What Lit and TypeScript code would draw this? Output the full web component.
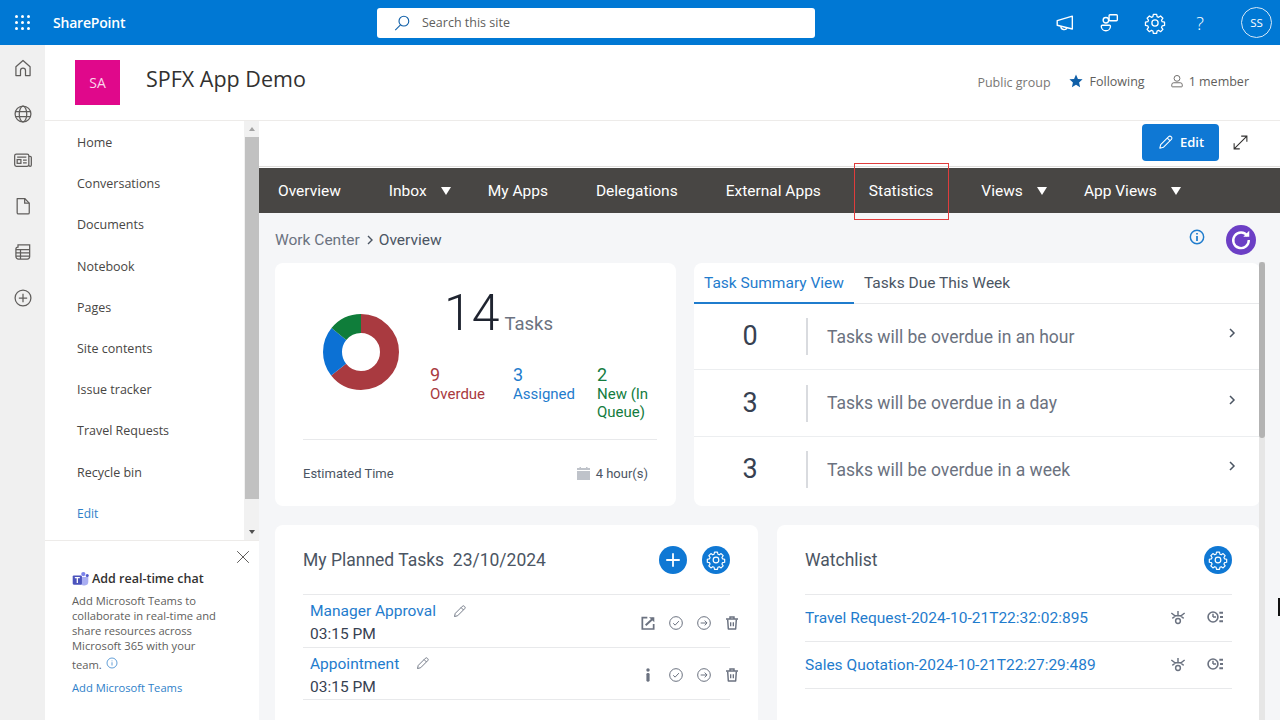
import { LitElement, html, css, svg } from 'lit';
import { customElement } from 'lit/decorators.js';

const gear = svg`<path d="M10.2 2.5h3.6l.5 2.6 1.6.7 2.2-1.5 2.5 2.5-1.5 2.2.7 1.6 2.6.5v3.6l-2.6.5-.7 1.6 1.5 2.2-2.5 2.5-2.2-1.5-1.6.7-.5 2.6h-3.6l-.5-2.6-1.6-.7-2.2 1.5-2.5-2.5 1.5-2.2-.7-1.6-2.6-.5v-3.6l2.6-.5.7-1.6-1.5-2.2 2.5-2.5 2.2 1.5 1.6-.7z" fill="none" stroke="currentColor" stroke-width="1.4" stroke-linejoin="round"/><circle cx="12" cy="12" r="3.4" fill="none" stroke="currentColor" stroke-width="1.4"/>`;

function icon(size: number, body: unknown, box = 24) {
	return html`<svg width=${size} height=${size} viewBox="0 0 ${box} ${box}" fill="none" stroke="currentColor" stroke-width="1.5">${body}</svg>`;
}

const pencil = svg`<path d="M4 20l1.2-5L16.5 3.7a2.3 2.3 0 0 1 3.3 0l.5.5a2.3 2.3 0 0 1 0 3.3L9 18.8z" stroke-linejoin="round"/><path d="M14.5 5.7l3.8 3.8"/>`;
const circleCheck = svg`<circle cx="12" cy="12" r="9.5"/><path d="M7.8 12.4l2.9 2.8 5.6-6"/>`;
const circleArrow = svg`<circle cx="12" cy="12" r="9.5"/><path d="M7 12h9.5M13 8.4l3.6 3.6-3.6 3.6"/>`;
const trash = svg`<path d="M3 6h18M9 5.5V3h6v2.5" stroke-width="2.2"/><path d="M5.5 6.5l1 14.5h11l1-14.5" stroke-width="2.2" stroke-linejoin="round"/><path d="M10 11v6M14 11v6" stroke-width="2"/>`;
const openOut = svg`<path d="M11 4H3.5v17h17v-7.5" stroke-width="2.6"/><path d="M8.5 15.5L20 5" stroke-width="3"/><path d="M13.5 3.5h8v7.5z" fill="currentColor" stroke="none"/>`;
const infoBar = svg`<circle cx="12" cy="4.5" r="2.6" fill="currentColor" stroke="none"/><rect x="9.6" y="9" width="4.8" height="13" rx="2" fill="currentColor" stroke="none"/>`;
const unwatch = svg`<path d="M2 6l5.5 4.2h9L22 6M3.5 14l4.5-3.5M20.5 14L16 10.5M12 3v6" stroke-width="2.2"/><circle cx="12" cy="18" r="3.6" stroke-width="2.2"/>`;
const history = svg`<circle cx="9" cy="12" r="7.4" stroke-width="2.4"/><path d="M9 12V7M9 12h4.6" stroke-width="2.2"/><path d="M18.5 5.5H24M19.5 12H24M18.5 18.5H24" stroke-width="3"/>`;

const NAV = ['Home', 'Conversations', 'Documents', 'Notebook', 'Pages', 'Site contents', 'Issue tracker', 'Travel Requests', 'Recycle bin'];

@customElement('app-root')
export class AppRoot extends LitElement {
	static styles = css`
		:host {
			display: block;
			width: 1280px;
			height: 720px;
			overflow: hidden;
			font-family: 'Open Sans', 'Liberation Sans', sans-serif;
			color: #323130;
		}
		svg {
			display: block;
			flex: none;
		}

		.topbar {
			height: 45px;
			background: #0078d4;
			color: #fff;
			display: flex;
			align-items: center;
		}
		.waffle {
			width: 15px;
			margin-left: 15px;
			display: grid;
			grid-template-columns: repeat(3, 3px);
			gap: 3px;
		}
		.waffle i {
			width: 3px;
			height: 3px;
			border-radius: 50%;
			background: #fff;
		}
		.brand {
			margin-left: 23px;
			width: 324px;
			font-size: 14px;
			font-weight: 600;
			letter-spacing: -0.2px;
		}
		.search {
			width: 438px;
			height: 30px;
			background: #fff;
			border-radius: 3px;
			display: flex;
			align-items: center;
			gap: 11px;
			padding-left: 16px;
			box-sizing: border-box;
			color: #605e5c;
			font-size: 12.5px;
		}
		.search svg {
			color: #0f5fa8;
		}
		.top-icons {
			margin-left: auto;
			display: flex;
			align-items: center;
			gap: 23px;
			padding-right: 8px;
		}
		.avatar {
			width: 29px;
			height: 29px;
			border: 1px solid #d6e8f7;
			border-radius: 50%;
			display: flex;
			align-items: center;
			justify-content: center;
			font-size: 11.5px;
			margin-left: 7px;
		}
		.help {
			font-size: 18px;
			font-weight: 300;
			width: 22px;
			text-align: center;
			line-height: 22px;
		}

		.frame {
			display: flex;
			height: 675px;
		}
		.rail {
			width: 45px;
			flex: none;
			background: #f0f0f0;
			color: #605e5c;
			display: flex;
			flex-direction: column;
			align-items: center;
			padding-top: 13px;
			gap: 26px;
			box-sizing: border-box;
		}
		.main {
			flex: 1;
			min-width: 0;
			display: flex;
			flex-direction: column;
		}

		.site {
			height: 76px;
			flex: none;
			box-sizing: border-box;
			border-bottom: 1px solid #edebe9;
			display: flex;
			align-items: flex-start;
			padding: 15px 31px 0 30px;
		}
		.tile {
			width: 45px;
			height: 45px;
			background: #e0088b;
			color: #fbd5ea;
			font-size: 14px;
			display: flex;
			align-items: center;
			justify-content: center;
		}
		.site h1 {
			margin: 4px 0 0 26px;
			font-size: 21.5px;
			font-weight: 500;
			line-height: 30px;
			color: #323130;
		}
		.meta {
			margin-left: auto;
			display: flex;
			align-items: center;
			font-size: 12.5px;
			color: #605e5c;
			height: 42px;
		}
		.meta .group {
			color: #797775;
			margin-right: 18px;
			padding-top: 2px;
		}
		.meta .star {
			color: #0f5fa8;
			margin-right: 7px;
		}
		.meta .person {
			margin: 0 5px 0 25px;
		}

		.below {
			flex: 1;
			display: flex;
			min-height: 0;
		}
		.side {
			width: 214px;
			flex: none;
			display: flex;
			flex-direction: column;
		}
		.side-list {
			height: 420px;
			flex: none;
			box-sizing: border-box;
			display: flex;
			border-bottom: 1px solid #edebe9;
		}
		.side-list ul {
			list-style: none;
			margin: 0;
			padding: 1px 0 0 32px;
			flex: 1;
			font-size: 12.5px;
			color: #484644;
		}
		.side-list li {
			height: 41.2px;
			line-height: 41.2px;
		}
		.side-list li.edit {
			color: #2f7fc9;
			font-size: 12px;
		}
		.side-scroll {
			width: 15px;
			background: #f1f1f1;
			margin-right: 0;
			display: flex;
			flex-direction: column;
			align-items: center;
		}
		.arrow-up {
			margin-top: 6px;
			border: 3.5px solid transparent;
			border-top: 0;
			border-bottom: 4px solid #a3a3a3;
		}
		.side-thumb {
			width: 14px;
			height: 362px;
			margin-top: 6px;
			background: #c1c1c1;
		}
		.arrow-down {
			margin-top: auto;
			margin-bottom: 6px;
			border: 3.5px solid transparent;
			border-bottom: 0;
			border-top: 4px solid #505050;
		}
		.teams {
			flex: 1;
			position: relative;
			padding: 29px 32px 0 27px;
			font-size: 11.2px;
			line-height: 15px;
			color: #605e5c;
		}
		.teams .close {
			position: absolute;
			top: 9px;
			right: 9px;
			color: #484644;
		}
		.teams h3 {
			margin: 0 0 5px;
			font-size: 12.5px;
			line-height: 18px;
			font-weight: 600;
			color: #323130;
			display: flex;
			align-items: center;
			gap: 3px;
		}
		.teams p {
			margin: 0;
		}
		.teams .last {
			display: flex;
			align-items: center;
			gap: 4px;
			margin-top: 4px;
			color: #605e5c;
		}
		.teams .last svg {
			color: #2f7fc9;
			margin-top: -4px;
		}
		.teams a {
			display: block;
			margin-top: 8px;
			color: #2f7fc9;
		}

		.content {
			flex: 1;
			min-width: 0;
			display: flex;
			flex-direction: column;
			position: relative;
			font-family: Roboto, 'Liberation Sans', sans-serif;
		}
		.commands {
			height: 46px;
			flex: none;
			box-sizing: border-box;
			border-bottom: 1px solid #e1dfdd;
			display: flex;
			align-items: center;
			justify-content: flex-end;
			gap: 13px;
			padding: 0 31px 3px 0;
		}
		.edit-btn {
			width: 77px;
			height: 37px;
			border-radius: 4px;
			background: #0f78d4;
			color: #fff;
			display: flex;
			align-items: center;
			justify-content: center;
			gap: 6px;
			font: 600 13px 'Open Sans', sans-serif;
		}
		.menu {
			height: 45px;
			flex: none;
			margin-top: 1px;
			background: #484644;
			color: #fff;
			display: flex;
			align-items: center;
			gap: 48px;
			padding-left: 19px;
			font-size: 15.5px;
		}
		.menu span {
			position: relative;
			white-space: nowrap;
		}
		.menu .has-caret {
			display: flex;
			align-items: center;
			gap: 13px;
			margin-right: -11px;
		}
		.menu .has-caret i {
			width: 0;
			height: 0;
			border-left: 5px solid transparent;
			border-right: 5px solid transparent;
			border-top: 8px solid #fff;
			margin-left: 1px;
		}
		.menu .marked::after {
			content: '';
			position: absolute;
			inset: -19px -16px -20px -15px;
			border: 1px solid #e03c3c;
		}

		.page {
			flex: 1;
			min-height: 0;
			background: #f5f6f8;
			padding: 13px 21px 0 16px;
		}
		.page-scroll {
			position: absolute;
			top: 141px;
			bottom: 0;
			right: 15px;
			width: 6px;
			background: #e6e6e6;
		}
		.page-scroll i {
			display: block;
			height: 176px;
			border-radius: 3px;
			background: #b3b3b3;
		}
		.crumbs {
			display: flex;
			align-items: center;
			height: 27px;
			font-size: 15.5px;
			color: #6b7280;
		}
		.crumbs svg.sep {
			margin: 0 5px 0 6px;
			color: #4b5563;
		}
		.crumbs b {
			font-weight: 400;
			color: #4b5563;
		}
		.crumbs .info {
			margin-left: auto;
			margin-right: 21px;
			margin-top: -5px;
			color: #1f7ccd;
		}
		.refresh {
			width: 30px;
			height: 30px;
			border-radius: 50%;
			background: #6c3fc5;
			color: #fff;
			display: flex;
			align-items: center;
			justify-content: center;
			margin-right: 3px;
		}
		.cards-top {
			display: grid;
			grid-template-columns: 401px 566px;
			gap: 18px;
			margin-top: 10px;
		}
		.cards-bottom {
			display: grid;
			grid-template-columns: 483px 483px;
			gap: 19px;
			margin-top: 19px;
		}
		.card {
			background: #fff;
			border-radius: 8px;
		}

		.summary {
			height: 243px;
			padding: 0 19px 0 28px;
			box-sizing: border-box;
		}
		.summary-top {
			height: 177px;
			display: flex;
			box-sizing: border-box;
			border-bottom: 1px solid #e8e9eb;
			padding-top: 51px;
		}
		.donut {
			margin-left: 20px;
		}
		.counts {
			margin-left: 31px;
			margin-top: -29px;
		}
		.total {
			display: flex;
			align-items: baseline;
			gap: 5px;
			margin-left: 14px;
			font-size: 50px;
			line-height: 56px;
			font-weight: 300;
			color: #1f2430;
		}
		.total span {
			font-size: 18.5px;
			font-weight: 400;
			color: #6b7280;
		}
		.stats {
			display: grid;
			grid-template-columns: 83px 84px 60px;
			margin-top: 13px;
			font-size: 15px;
			line-height: 18px;
		}
		.stats b {
			display: block;
			font-weight: 400;
			font-size: 18px;
			line-height: 20px;
		}
		.red {
			color: #a93a40;
		}
		.blue {
			color: #1f7ccd;
		}
		.green {
			color: #137c40;
		}
		.estimate {
			display: flex;
			align-items: center;
			justify-content: space-between;
			height: 66px;
			padding: 0 9px 0 0;
			font-size: 13px;
			color: #4b5563;
		}
		.estimate div {
			display: flex;
			align-items: center;
			gap: 6px;
		}
		.estimate svg {
			color: #bfc3ca;
		}

		.tabs {
			height: 243px;
			overflow: hidden;
		}
		.tabbar {
			height: 41px;
			box-sizing: border-box;
			border-bottom: 1px solid #e8e9eb;
			display: flex;
			font-size: 15.5px;
			color: #4b5563;
		}
		.tabbar span {
			height: 41px;
			box-sizing: border-box;
			line-height: 40px;
			padding: 0 10px;
		}
		.tabbar .on {
			color: #1f7ccd;
			border-bottom: 2px solid #1f7ccd;
		}
		.row {
			height: 66.4px;
			box-sizing: border-box;
			border-bottom: 1px solid #eceef0;
			display: flex;
			align-items: center;
			font-size: 17.5px;
			color: #6b7280;
		}
		.row:last-child {
			border-bottom: 0;
		}
		.row b {
			width: 112px;
			height: 37px;
			line-height: 37px;
			text-align: center;
			border-right: 2px solid #d9dbdf;
			font-size: 27px;
			font-weight: 400;
			color: #374151;
			margin-right: 19px;
		}
		.row svg {
			margin-left: auto;
			margin-right: 24px;
			margin-top: -7px;
			color: #4b5563;
		}

		.bottom {
			height: 300px;
			padding: 0 28px;
			box-sizing: border-box;
		}
		.bottom-head {
			height: 70px;
			box-sizing: border-box;
			border-bottom: 1px solid #e8e9eb;
			display: flex;
			align-items: center;
			gap: 15px;
			font-size: 17.5px;
			color: #4b5563;
			padding-top: 1px;
		}
		.bottom-head h2 {
			margin: 0 auto 0 0;
			font: inherit;
			white-space: pre;
		}
		.round {
			width: 28px;
			height: 28px;
			border-radius: 50%;
			background: #0f78d4;
			color: #fff;
			display: flex;
			align-items: center;
			justify-content: center;
		}
		.task {
			height: 52.5px;
			box-sizing: border-box;
			border-bottom: 1px solid #e8e9eb;
			display: flex;
			padding-top: 6px;
			margin-right: 0;
			color: #4b5563;
		}
		.task a {
			display: flex;
			align-items: center;
			font-size: 15.5px;
			line-height: 20px;
			color: #1f7ccd;
		}
		.task a svg {
			margin-left: 16px;
			color: #6b7280;
		}
		.task time {
			display: block;
			margin-top: 4px;
			font-size: 15.5px;
			line-height: 18px;
			color: #374151;
		}
		.task .who {
			padding-left: 7px;
		}
		.actions {
			margin-left: auto;
			display: flex;
			align-items: center;
			gap: 12px;
			margin-right: -10px;
			padding-bottom: 2px;
			color: #6b7280;
		}
		.watch {
			height: 47px;
			box-sizing: border-box;
			border-bottom: 1px solid #e8e9eb;
			display: flex;
			align-items: center;
		}
		.watch a {
			font-size: 15.5px;
			color: #1f7ccd;
		}
		.watch .actions {
			gap: 21px;
			margin-right: 9px;
			color: #6b7280;
		}
		.cursor {
			position: absolute;
			right: 0;
			top: 477px;
			width: 2px;
			height: 18px;
			background: #111;
		}
	`;

	render() {
		return html`
			<div class="topbar">
				<div class="waffle">${Array.from({ length: 9 }, () => html`<i></i>`)}</div>
				<div class="brand">SharePoint</div>
				<div class="search">
					${icon(18, svg`<circle cx="14.5" cy="9.5" r="6.5"/><path d="M10 14.5L3 21.5"/>`)}
					<span>Search this site</span>
				</div>
				<div class="top-icons">
					${icon(22, svg`<path d="M3.5 9.5L20 4.5v14L3.5 14.5z" stroke-linejoin="round"/><path d="M7.5 15.5a3.5 3.5 0 0 0 6.8 1.3"/>`)}
					${icon(22, svg`<rect x="11" y="3" width="9" height="6.5" rx="1"/><circle cx="7.5" cy="9" r="3"/><path d="M3.5 14.5h8a1 1 0 0 1 1 1c0 3-2.5 5-5 5s-5-2-5-5a1 1 0 0 1 1-1z"/>`)}
					${icon(22, gear)}
					<div class="help">?</div>
					<div class="avatar">SS</div>
				</div>
			</div>
			<div class="frame">
				<nav class="rail">
					${icon(20, svg`<path d="M3.5 21V10.5L12 3l8.5 7.5V21h-5.5v-6a3 3 0 0 0-6 0v6z" stroke-linejoin="round"/>`)}
					${icon(20, svg`<circle cx="12" cy="12" r="9.5"/><ellipse cx="12" cy="12" rx="4.5" ry="9.5"/><path d="M3 9h18M3 15h18"/>`)}
					${icon(20, svg`<rect x="2" y="5" width="17" height="14.5" rx="2"/><path d="M19 7.5h1.5a1.5 1.5 0 0 1 1.5 1.5v9a1.5 1.5 0 0 1-3 0"/><rect x="5" y="11.5" width="4.5" height="4.5"/><path d="M12 12h4.5M12 15.5h4.5M5 8.5h11"/>`)}
					${icon(20, svg`<path d="M5 3h9l5.5 5.5V20a1.5 1.5 0 0 1-1.5 1.5H6.5A1.5 1.5 0 0 1 5 20z" stroke-linejoin="round"/><path d="M14 3v5.5h5.5"/>`)}
					${icon(20, svg`<path d="M6 3.5h14v14a3 3 0 0 1-3 3H6.5A3 3 0 0 1 3.5 17.5V8.5A2.5 2.5 0 0 1 6 6z"/><path d="M3.5 9h16.5M3.5 13h16.5M3.5 17h16.5M9 9v11.5"/>`)}
					${icon(20, svg`<circle cx="12" cy="12" r="9.5"/><path d="M12 7v10M7 12h10"/>`)}
				</nav>
				<div class="main">
					<header class="site">
						<div class="tile">SA</div>
						<h1>SPFX App Demo</h1>
						<div class="meta">
							<span class="group">Public group</span>
							<span class="star">
								<svg width="14" height="14" viewBox="0 0 24 24"><path fill="currentColor" d="M12 1l3.3 7.4 8 .8-6 5.4 1.7 7.9-7-4-7 4 1.7-7.9-6-5.4 8-.8z"/></svg>
							</span>
							<span>Following</span>
							<span class="person">${icon(14, svg`<circle cx="12" cy="7.5" r="5"/><path d="M3 21v-2.5a3.5 3.5 0 0 1 3.5-3.5h11a3.5 3.5 0 0 1 3.5 3.5V21a1 1 0 0 1-1 1H4a1 1 0 0 1-1-1z"/>`)}</span>
							<span>1 member</span>
						</div>
					</header>
					<div class="below">
						<aside class="side">
							<div class="side-list">
								<ul>
									${NAV.map((n) => html`<li>${n}</li>`)}
									<li class="edit">Edit</li>
								</ul>
								<div class="side-scroll">
									<div class="arrow-up"></div>
									<div class="side-thumb"></div>
									<div class="arrow-down"></div>
								</div>
							</div>
							<div class="teams">
								<span class="close">${icon(14, svg`<path d="M2 2l20 20M22 2L2 22"/>`)}</span>
								<h3>
									<svg width="17" height="16" viewBox="0 0 24 22">
										<circle cx="16" cy="4" r="3" fill="#7b83eb"/>
										<circle cx="21.5" cy="6" r="2.2" fill="#5059c9"/>
										<path d="M11 8h12v7a5 5 0 0 1-5 5h-2a5 5 0 0 1-5-5z" fill="#7b83eb" opacity=".65"/>
										<rect x="1" y="6" width="13" height="13" rx="1.5" fill="#4b53bc"/>
										<path d="M4 9h7M7.5 9v7.5" stroke="#fff" stroke-width="1.8"/>
									</svg>
									Add real-time chat
								</h3>
								<p>Add Microsoft Teams to collaborate in real-time and share resources across Microsoft 365 with your</p>
								<div class="last">team. ${icon(12, svg`<circle cx="12" cy="12" r="10"/><path d="M12 10.5V17M12 7v1.5"/>`)}</div>
								<a>Add Microsoft Teams</a>
							</div>
						</aside>
						<section class="content">
							<div class="commands">
								<div class="edit-btn">${icon(17, pencil)}Edit</div>
								${icon(17, svg`<path d="M3 21L21 3M13 3h8v8M3 13v8h8"/>`)}
							</div>
							<div class="menu">
								<span>Overview</span>
								<span class="has-caret">Inbox<i></i></span>
								<span>My Apps</span>
								<span>Delegations</span>
								<span>External Apps</span>
								<span class="marked">Statistics</span>
								<span class="has-caret">Views<i></i></span>
								<span class="has-caret">App Views<i></i></span>
							</div>
							<div class="page">
								<div class="crumbs">
									Work Center
									<svg class="sep" width="8" height="10" viewBox="0 0 8 10" fill="none" stroke="currentColor" stroke-width="1.4"><path d="M2 1l4 4-4 4"/></svg>
									<b>Overview</b>
									<svg class="info" width="16" height="16" viewBox="0 0 24 24" fill="none" stroke="currentColor" stroke-width="2.2"><circle cx="12" cy="12" r="10"/><path d="M12 10.5V18M12 6v2.4" stroke-width="2.6"/></svg>
									<div class="refresh">
										<svg width="22" height="22" viewBox="0 0 24 24" fill="none" stroke="currentColor" stroke-width="2.6"><path d="M19 7.5A8.5 8.5 0 1 0 20.5 12"/><path d="M14.5 8.5h6.5V2z" fill="currentColor" stroke="none"/></svg>
									</div>
								</div>
								<div class="cards-top">
									<div class="card summary">
										<div class="summary-top">
											<svg class="donut" width="76" height="76" viewBox="0 0 76 76" fill="none" stroke-width="19">
												<g transform="rotate(-90 38 38)">
													<circle cx="38" cy="38" r="28.5" stroke="#a93a40" stroke-dasharray="115.1 179.1"></circle>
													<circle cx="38" cy="38" r="28.5" stroke="#0c71d4" stroke-dasharray="38.4 179.1" stroke-dashoffset="-115.1"></circle>
													<circle cx="38" cy="38" r="28.5" stroke="#0f7d3a" stroke-dasharray="25.6 179.1" stroke-dashoffset="-153.5"></circle>
												</g>
											</svg>
											<div class="counts">
												<div class="total">14<span>Tasks</span></div>
												<div class="stats">
													<div class="red"><b>9</b>Overdue</div>
													<div class="blue"><b>3</b>Assigned</div>
													<div class="green"><b>2</b>New (In Queue)</div>
												</div>
											</div>
										</div>
										<div class="estimate">
											<span>Estimated Time</span>
											<div>
												<svg width="13" height="13" viewBox="0 0 13 13"><path fill="currentColor" d="M0 4h13v9H0zM0 1h13v2H0zM2.5 0h1.5v1H2.5zM9 0h1.5v1H9z"/></svg>
												4 hour(s)
											</div>
										</div>
									</div>
									<div class="card tabs">
										<div class="tabbar">
											<span class="on">Task Summary View</span>
											<span>Tasks Due This Week</span>
										</div>
										${[
											['0', 'Tasks will be overdue in an hour'],
											['3', 'Tasks will be overdue in a day'],
											['3', 'Tasks will be overdue in a week'],
										].map(
											([n, t]) => html`<div class="row">
												<b>${n}</b>${t}
												<svg width="8" height="10" viewBox="0 0 8 10" fill="none" stroke="currentColor" stroke-width="1.5"><path d="M2 1l4 4-4 4"/></svg>
											</div>`,
										)}
									</div>
								</div>
								<div class="cards-bottom">
									<div class="card bottom">
										<div class="bottom-head">
											<h2>My Planned Tasks  23/10/2024</h2>
											<div class="round">${icon(18, svg`<path d="M12 3v18M3 12h18" stroke-width="2.4"/>`)}</div>
											<div class="round">${icon(20, gear)}</div>
										</div>
										<div class="task">
											<div class="who">
												<a>Manager Approval ${icon(15, pencil)}</a>
												<time>03:15 PM</time>
											</div>
											<div class="actions">
												${icon(16, openOut)}${icon(16, circleCheck)}${icon(16, circleArrow)}${icon(16, trash)}
											</div>
										</div>
										<div class="task">
											<div class="who">
												<a>Appointment ${icon(15, pencil)}</a>
												<time>03:15 PM</time>
											</div>
											<div class="actions">
												${icon(16, infoBar)}${icon(16, circleCheck)}${icon(16, circleArrow)}${icon(16, trash)}
											</div>
										</div>
									</div>
									<div class="card bottom">
										<div class="bottom-head">
											<h2>Watchlist</h2>
											<div class="round">${icon(20, gear)}</div>
										</div>
										<div class="watch">
											<a>Travel Request-2024-10-21T22:32:02:895</a>
											<div class="actions">${icon(16, unwatch)}${icon(16, history)}</div>
										</div>
										<div class="watch">
											<a>Sales Quotation-2024-10-21T22:27:29:489</a>
											<div class="actions">${icon(16, unwatch)}${icon(16, history)}</div>
										</div>
									</div>
								</div>
							</div>
							<div class="page-scroll"><i></i></div>
							<div class="cursor"></div>
						</section>
					</div>
				</div>
			</div>
		`;
	}
}
